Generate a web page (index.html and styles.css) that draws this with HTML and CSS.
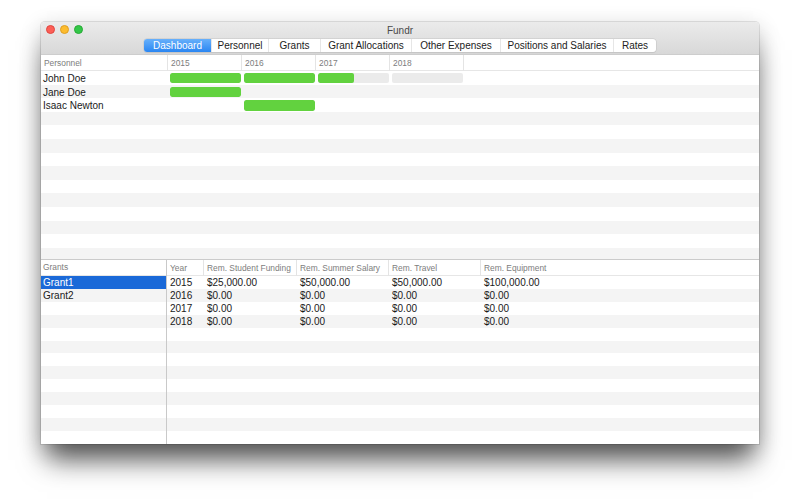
FILE: index.html
```html
<!DOCTYPE html>
<html lang="en">
<head>
    <meta charset="UTF-8">
    <title>Fundr</title>
    <link rel="stylesheet" href="styles.css">
</head>
<body>
    <div class="window">
        <div class="titlebar">
            <div class="title-row">
                <div class="lights">
                    <span class="light red"></span>
                    <span class="light yellow"></span>
                    <span class="light green"></span>
                </div>
                <div class="title">Fundr</div>
                <div></div>
            </div>
            <div class="toolbar">
                <div class="segmented">
                    <span class="seg active">Dashboard</span>
                    <span class="seg">Personnel</span>
                    <span class="seg">Grants</span>
                    <span class="seg">Grant Allocations</span>
                    <span class="seg">Other Expenses</span>
                    <span class="seg">Positions and Salaries</span>
                    <span class="seg">Rates</span>
                </div>
            </div>
        </div>

        <!-- Timeline of personnel per year -->
        <div class="top-pane">
            <div class="timeline-row timeline-head">
                <div class="th">Personnel</div>
                <div class="th">2015</div>
                <div class="th">2016</div>
                <div class="th">2017</div>
                <div class="th">2018</div>
                <div class="th last"></div>
            </div>
            <div class="timeline-body">
                <div class="timeline-row">
                    <div class="name">John Doe</div>
                    <div class="cell"><div class="bar"><div class="fill" style="width: 100%"></div></div></div>
                    <div class="cell"><div class="bar"><div class="fill" style="width: 100%"></div></div></div>
                    <div class="cell"><div class="bar"><div class="fill" style="width: 50%"></div></div></div>
                    <div class="cell"><div class="bar"><div class="fill" style="width: 0%"></div></div></div>
                    <div class="cell"></div>
                </div>
                <div class="timeline-row">
                    <div class="name">Jane Doe</div>
                    <div class="cell"><div class="bar"><div class="fill" style="width: 100%"></div></div></div>
                    <div class="cell"></div>
                    <div class="cell"></div>
                    <div class="cell"></div>
                    <div class="cell"></div>
                </div>
                <div class="timeline-row">
                    <div class="name">Isaac Newton</div>
                    <div class="cell"></div>
                    <div class="cell"><div class="bar"><div class="fill" style="width: 100%"></div></div></div>
                    <div class="cell"></div>
                    <div class="cell"></div>
                    <div class="cell"></div>
                </div>
            </div>
        </div>

        <div class="bottom-pane">
            <div class="grant-list">
                <div class="list-head">Grants</div>
                <div class="list-body">
                    <div class="list-row selected">Grant1</div>
                    <div class="list-row">Grant2</div>
                </div>
            </div>

            <div class="funding">
                <div class="fund-row fund-head">
                    <div class="th">Year</div>
                    <div class="th">Rem. Student Funding</div>
                    <div class="th">Rem. Summer Salary</div>
                    <div class="th">Rem. Travel</div>
                    <div class="th last">Rem. Equipment</div>
                </div>
                <div class="fund-body">
                    <div class="fund-row">
                        <div>2015</div><div>$25,000.00</div><div>$50,000.00</div><div>$50,000.00</div><div>$100,000.00</div>
                    </div>
                    <div class="fund-row">
                        <div>2016</div><div>$0.00</div><div>$0.00</div><div>$0.00</div><div>$0.00</div>
                    </div>
                    <div class="fund-row">
                        <div>2017</div><div>$0.00</div><div>$0.00</div><div>$0.00</div><div>$0.00</div>
                    </div>
                    <div class="fund-row">
                        <div>2018</div><div>$0.00</div><div>$0.00</div><div>$0.00</div><div>$0.00</div>
                    </div>
                </div>
            </div>
        </div>
    </div>
</body>
</html>
```

FILE: styles.css
```css
* {
    margin: 0;
    padding: 0;
    box-sizing: border-box;
}

html,
body {
    height: 100%;
}

body {
    background: #fff;
    padding: 22px 0 0 41px;
    font-family: 'Liberation Sans', Arial, sans-serif;
    font-size: 10px;
    color: #1a1a1a;
}

.window {
    width: 718px;
    height: 422px;
    display: flex;
    flex-direction: column;
    background: #fff;
    border-radius: 4px 4px 0 0;
    box-shadow: 0 22px 26px -6px rgba(0, 0, 0, 0.62),
                0 6px 22px rgba(0, 0, 0, 0.2),
                0 0 0 1px rgba(0, 0, 0, 0.1);
}

/* Title bar + toolbar */
.titlebar {
    height: 33px;
    background: linear-gradient(#ebebeb, #d8d8d8);
    border-bottom: 1px solid #cdcdcd;
    border-radius: 4px 4px 0 0;
}

.title-row {
    height: 16px;
    display: grid;
    grid-template-columns: 1fr auto 1fr;
    align-items: center;
}

.lights {
    display: flex;
    gap: 5px;
    padding-left: 5px;
    margin-top: -1px;
}

.light {
    width: 9px;
    height: 9px;
    border-radius: 50%;
}

.red { background: #fc5f57; border: 1px solid #e1463f; }
.yellow { background: #fdbc2e; border: 1px solid #de9f23; }
.green { background: #33c748; border: 1px solid #27aa35; }

.title {
    color: #4a4a4a;
    font-size: 10px;
}

.toolbar {
    display: flex;
    justify-content: center;
    padding-top: 1px;
}

.segmented {
    display: grid;
    grid-template-columns: 67px 57px 52px 91px 89px 113px 43px;
    height: 13px;
    background: #fff;
    border-radius: 3px;
    box-shadow: 0 0 0 0.5px #c4c4c4, 0 1px 1px rgba(0, 0, 0, 0.08);
}

.seg {
    text-align: center;
    line-height: 13px;
    font-size: 10px;
    color: #222;
    border-left: 1px solid #e6e6e6;
}

.seg:first-child {
    border-left: none;
}

.seg.active {
    color: #fff;
    background: linear-gradient(#67b0fb, #2a86f2);
    border-radius: 3px 0 0 3px;
}

/* Header cells shared by both tables */
.th {
    padding-left: 3px;
    font-size: 8.4px;
    color: #7d7d7d;
    border-right: 1px solid #e4e4e4;
    line-height: 16px;
}

.th.last {
    border-right: none;
}

/* Personnel timeline */
.top-pane {
    height: 205px;
    overflow: hidden;
    border-bottom: 1px solid #cbcbcb;
}

.timeline-row {
    display: grid;
    grid-template-columns: 127px 74px 74px 74px 74px 1fr;
    height: 13.6px;
}

.timeline-head {
    height: 16px;
    border-bottom: 1px solid #e6e6e6;
}

.timeline-body {
    height: 188px;
    background: repeating-linear-gradient(#fff 0 13.6px, #f4f4f4 13.6px 27.2px);
}

.name {
    padding: 1px 0 0 2px;
    line-height: 13.6px;
}

.cell {
    display: flex;
    align-items: center;
    padding: 0 1px 0 2px;
}

.bar {
    width: 100%;
    height: 10.4px;
    background: #ebebeb;
    border-radius: 2px;
    overflow: hidden;
}

.fill {
    height: 100%;
    background: #62d23f;
    border-radius: 2px;
}

/* Grants + funding */
.bottom-pane {
    flex: 1;
    display: flex;
    overflow: hidden;
}

.grant-list {
    width: 126px;
    border-right: 1px solid #c9c9c9;
    display: flex;
    flex-direction: column;
}

.list-head {
    height: 16px;
    padding-left: 2px;
    font-size: 8.4px;
    color: #7d7d7d;
    line-height: 15px;
    border-bottom: 1px solid #e6e6e6;
}

.list-body,
.fund-body {
    flex: 1;
    background: repeating-linear-gradient(#fff 0 12.9px, #f4f4f4 12.9px 25.8px);
}

.list-row {
    height: 12.9px;
    line-height: 13.5px;
    padding-left: 2px;
}

.list-row.selected {
    background: #1a69d8;
    color: #fff;
}

.funding {
    flex: 1;
    display: flex;
    flex-direction: column;
}

.fund-row {
    display: grid;
    grid-template-columns: 37px 93px 92px 92px 1fr;
    height: 12.9px;
    line-height: 13.5px;
}

.fund-row div {
    padding-left: 3px;
}

.fund-head {
    height: 16px;
    line-height: 15px;
    border-bottom: 1px solid #e6e6e6;
}
```
